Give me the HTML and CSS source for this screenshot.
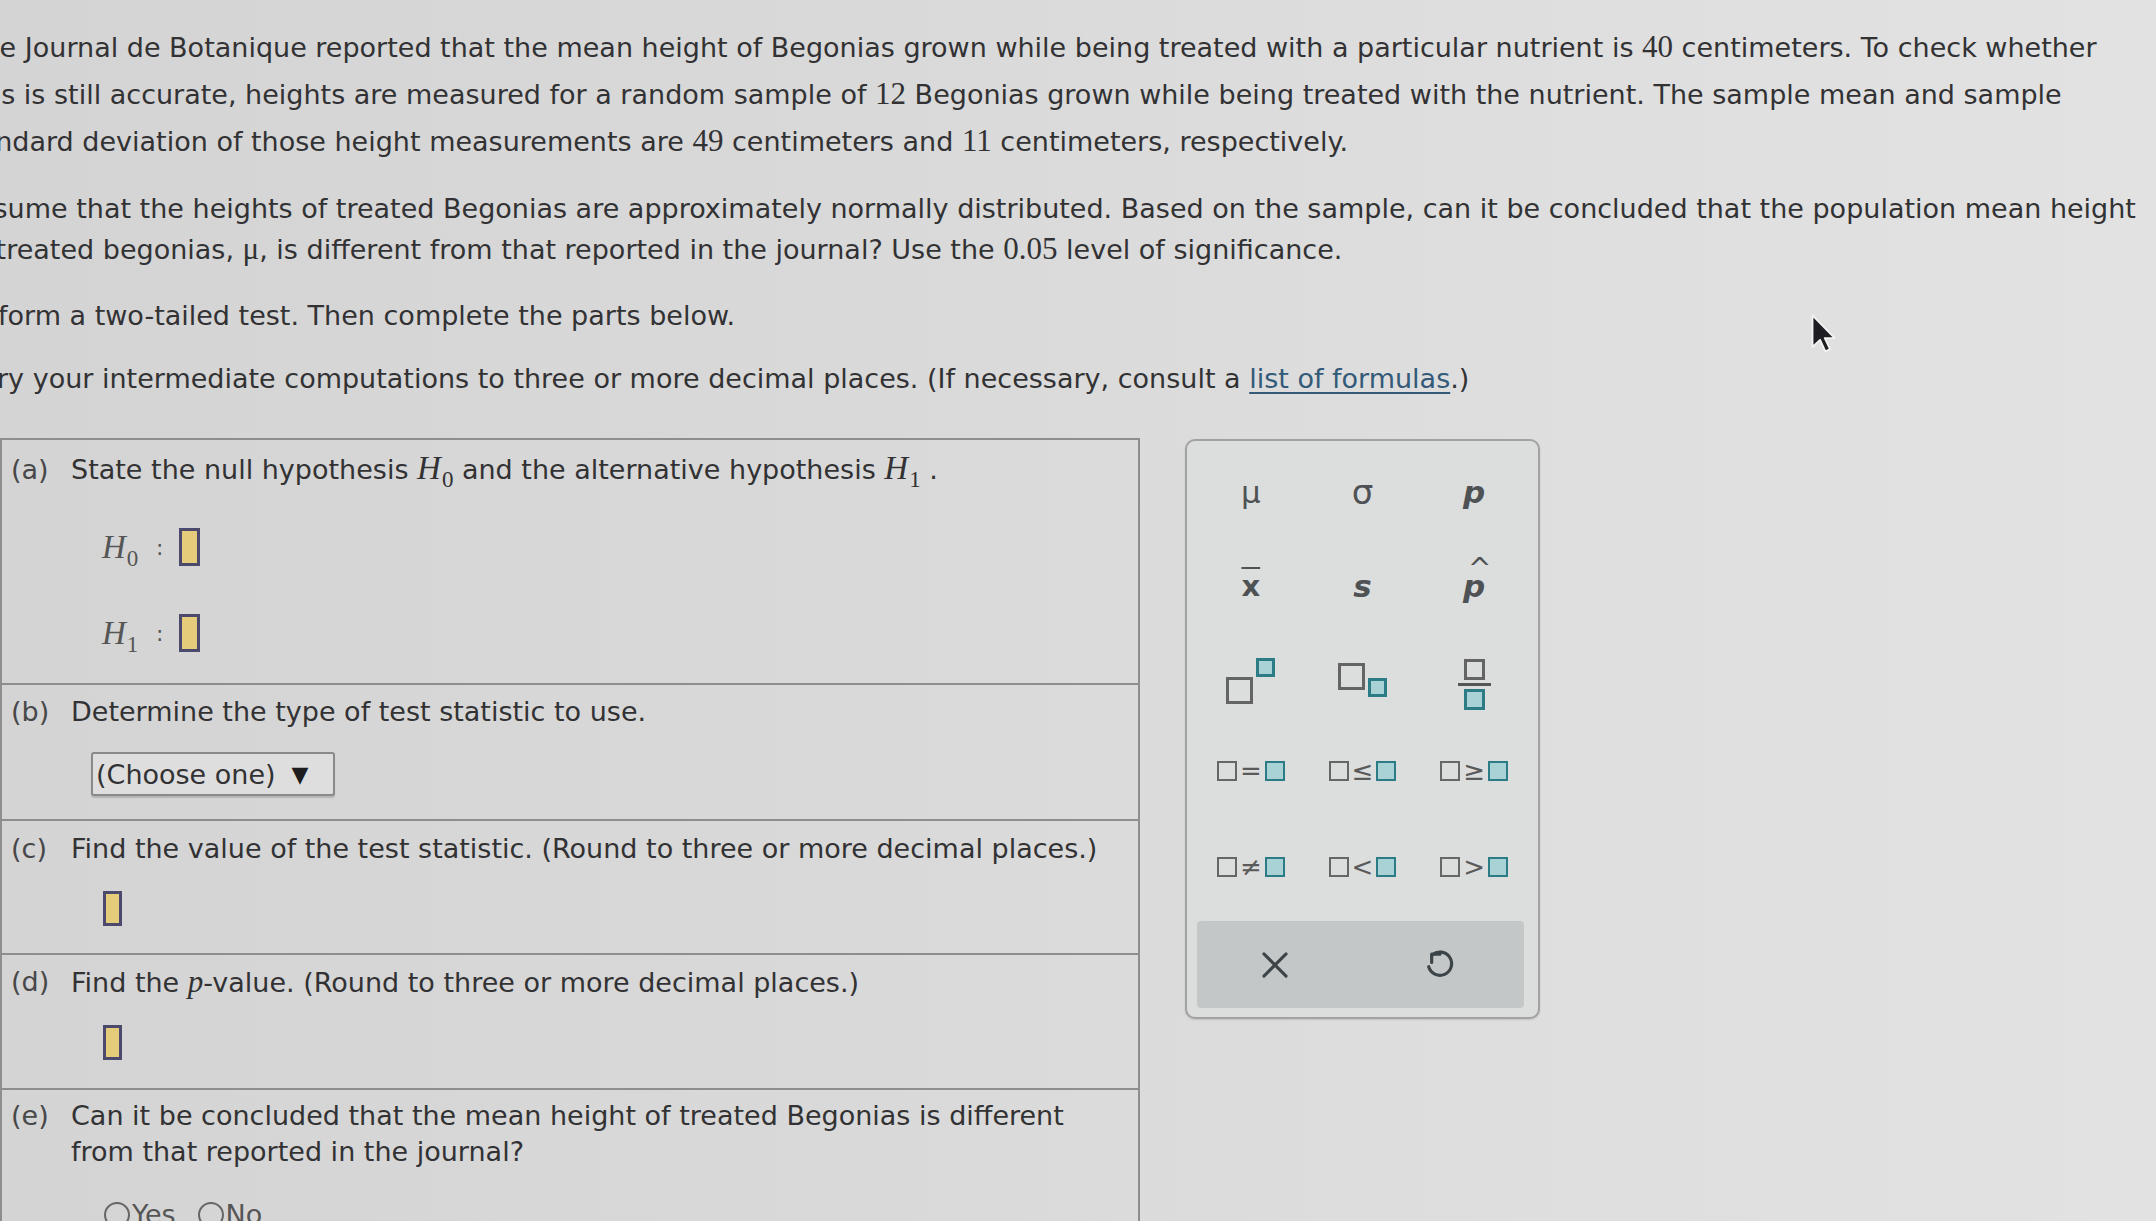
FILE: index.html
```html
<!DOCTYPE html>
<html>
<head>
<meta charset="utf-8">
<link rel="stylesheet" href="styles.css">
</head>
<body>
<div class="page">
  <div class="intro">
    <p class="p1">The Journal de Botanique reported that the mean height of Begonias grown while being treated with a particular nutrient is <span class="num">40</span> centimeters. To check whether<br>this is still accurate, heights are measured for a random sample of <span class="num">12</span> Begonias grown while being treated with the nutrient. The sample mean and sample<br><span class="l3">standard deviation of those height measurements are <span class="num">49</span> centimeters and <span class="num">11</span> centimeters, respectively.</span></p>
    <p class="p2">Assume that the heights of treated Begonias are approximately normally distributed. Based on the sample, can it be concluded that the population mean height<br>of treated begonias, <span class="num">μ</span>, is different from that reported in the journal? Use the <span class="num">0.05</span> level of significance.</p>
    <p class="p3">Perform a two-tailed test. Then complete the parts below.</p>
    <p class="p4">Carry your intermediate computations to three or more decimal places. (If necessary, consult a <a class="link">list of formulas</a>.)</p>
  </div>

  <div class="work">
    <div class="parts">
      <div class="part part-a">
        <div class="head"><span class="lbl">(a)</span><span class="txt">State the null hypothesis <span class="hv">H<sub>0</sub></span> and the alternative hypothesis <span class="hv">H<sub>1</sub></span> .</span></div>
        <div class="hyp"><span class="hv big">H<sub>0</sub></span><span class="colon">:</span><span class="inbox"></span></div>
        <div class="hyp hyp2"><span class="hv big">H<sub>1</sub></span><span class="colon">:</span><span class="inbox"></span></div>
      </div>
      <div class="part part-b">
        <div class="head"><span class="lbl">(b)</span><span class="txt">Determine the type of test statistic to use.</span></div>
        <div class="select"><span>(Choose one)</span><span class="tri">▼</span></div>
      </div>
      <div class="part part-c">
        <div class="head"><span class="lbl">(c)</span><span class="txt">Find the value of the test statistic. (Round to three or more decimal places.)</span></div>
        <div class="ans"><span class="inbox small"></span></div>
      </div>
      <div class="part part-d">
        <div class="head"><span class="lbl">(d)</span><span class="txt">Find the <i class="pv">p</i>-value. (Round to three or more decimal places.)</span></div>
        <div class="ans"><span class="inbox small"></span></div>
      </div>
      <div class="part part-e">
        <div class="head"><span class="lbl">(e)</span><span class="txt">Can it be concluded that the mean height of treated Begonias is different<br>from that reported in the journal?</span></div>
        <div class="radios"><span class="radio"></span><span class="rl">Yes</span><span class="radio"></span><span class="rl">No</span></div>
      </div>
    </div>

    <div class="palette">
      <div class="grid">
        <div class="cell sym">μ</div>
        <div class="cell sym sigma">σ</div>
        <div class="cell sym it">p</div>
        <div class="cell sym xbar">x</div>
        <div class="cell sym it">s</div>
        <div class="cell sym it"><span class="phat">p</span></div>
        <div class="cell"><span class="tpl sup"><span class="sq g"></span><span class="sq t s"></span></span></div>
        <div class="cell"><span class="tpl sub"><span class="sq g"></span><span class="sq t s"></span></span></div>
        <div class="cell"><span class="tpl frac"><span class="sq g s"></span><span class="bar"></span><span class="sq t s"></span></span></div>
        <div class="cell"><span class="rel"><span class="mini g"></span><span class="op">=</span><span class="mini t"></span></span></div>
        <div class="cell"><span class="rel"><span class="mini g"></span><span class="op">≤</span><span class="mini t"></span></span></div>
        <div class="cell"><span class="rel"><span class="mini g"></span><span class="op">≥</span><span class="mini t"></span></span></div>
        <div class="cell"><span class="rel"><span class="mini g"></span><span class="op">≠</span><span class="mini t"></span></span></div>
        <div class="cell"><span class="rel"><span class="mini g"></span><span class="op">&lt;</span><span class="mini t"></span></span></div>
        <div class="cell"><span class="rel"><span class="mini g"></span><span class="op">&gt;</span><span class="mini t"></span></span></div>
      </div>
      <div class="actions">
        <svg class="ico ico-x" viewBox="0 0 24 24" width="38" height="38"><path d="M5 5 L19 19 M19 5 L5 19" stroke="#3c4448" stroke-width="1.9" fill="none" stroke-linecap="round"/></svg>
        <svg class="ico ico-undo" viewBox="0 0 24 24" width="40" height="40"><path d="M7 10.5 V5.5 H12" stroke="#3c4448" stroke-width="1.9" fill="none" stroke-linecap="round" stroke-linejoin="round"/><path d="M7.4 5.9 A7 7 0 1 1 5.2 13" stroke="#3c4448" stroke-width="1.9" fill="none" stroke-linecap="round"/></svg>
      </div>
    </div>
  </div>
</div>
<svg class="cursor" viewBox="0 0 22 36" width="26" height="42"><path d="M2 2 L2 29 L8.5 23 L13 33 L17 31 L12.5 21.5 L21 21.5 Z" fill="#1e1e22" stroke="#f2f2f2" stroke-width="1.6" stroke-linejoin="round"/></svg>
</body>
</html>
```

FILE: styles.css
```css
html, body {
  margin: 0;
  padding: 0;
}
body {
  width: 2156px;
  height: 1221px;
  overflow: hidden;
  position: relative;
  background: linear-gradient(90deg, #d4d4d4 0%, #d9d9d9 40%, #dfdfdf 75%, #e2e2e2 100%);
  font-family: "DejaVu Sans", Verdana, sans-serif;
  font-size: 27px;
  color: #323234;
}
.page {
  padding-top: 24px;
}
.intro p {
  margin: 0;
  white-space: nowrap;
}
.p1 { line-height: 47px; margin-left: -34px !important; }
.l3 { margin-left: -12px; }
.p2 { line-height: 41px; margin-top: 23px !important; margin-left: -39px !important; }
.p3 { line-height: 41px; margin-top: 25px !important; margin-left: -45px !important; }
.p4 { line-height: 41px; margin-top: 22px !important; margin-left: -49px !important; }
.num {
  font-family: "Liberation Serif", "Times New Roman", serif;
  font-size: 31px;
  line-height: 1;
}
.link {
  color: #335a78;
  text-decoration: underline;
  text-decoration-thickness: 2px;
  text-underline-offset: 4px;
}

.work {
  display: flex;
  align-items: flex-start;
  gap: 45px;
  margin-top: 39px;
}
.parts {
  width: 1140px;
  flex: none;
  border: 2px solid #8e8e8e;
  border-bottom: none;
  height: 800px;
  box-sizing: border-box;
}
.part {
  box-sizing: border-box;
  border-bottom: 2px solid #8e8e8e;
  padding-left: 9px;
}
.part-a { height: 245px; padding-top: 12px; }
.part-b { height: 136px; padding-top: 9px; }
.part-c { height: 134px; padding-top: 10px; }
.part-d { height: 135px; padding-top: 9px; }
.part-e { border-bottom: none; padding-top: 8px; }

.head {
  display: flex;
  line-height: 36px;
  white-space: nowrap;
}
.lbl {
  width: 60px;
  flex: none;
  color: #48484a;
}
.hv {
  font-family: "Liberation Serif", "Times New Roman", serif;
  font-style: italic;
  font-size: 33px;
  line-height: 1;
}
.hv sub {
  font-style: normal;
  font-size: 23px;
  vertical-align: -8px;
  line-height: 0;
  margin-left: 1px;
}
.hyp {
  display: flex;
  align-items: center;
  height: 38px;
  margin-left: 91px;
  margin-top: 40px;
  color: #555;
}
.hyp2 { margin-top: 48px; }
.hyp .big { font-size: 33px; width: 54px; }
.colon {
  font-size: 22px;
  width: 23px;
  color: #555;
}
.inbox {
  display: inline-block;
  box-sizing: border-box;
  width: 21px;
  height: 38px;
  border: 3px solid #4b4a6c;
  background: #e5cc7a;
}
.inbox.small {
  width: 19px;
  height: 35px;
}
.select {
  display: inline-flex;
  align-items: center;
  gap: 16px;
  box-sizing: border-box;
  width: 244px;
  height: 44px;
  margin-left: 80px;
  margin-top: 22px;
  padding-left: 3px;
  border: 2px solid #8a8a8a;
  border-radius: 3px;
  background: #dedede;
  box-shadow: 0 2px 1px rgba(0,0,0,0.15);
  color: #323234;
}
.tri {
  font-size: 22px;
  color: #1d1d1f;
}
.ans {
  margin-left: 92px;
  margin-top: 24px;
  height: 35px;
}
.pv {
  font-family: "Liberation Serif", serif;
  font-size: 31px;
}
.radios {
  display: flex;
  align-items: center;
  margin-left: 93px;
  margin-top: 29px;
  color: #555;
}
.radio {
  width: 22px;
  height: 22px;
  border: 2px solid #666;
  border-radius: 50%;
  margin-right: 2px;
}
.rl { margin-right: 22px; font-size: 27px; }

.palette {
  flex: none;
  box-sizing: border-box;
  width: 355px;
  height: 580px;
  margin-top: 1px;
  border: 2px solid #a2a2a2;
  border-radius: 10px;
  background: #dcdede;
  padding: 4px 8px 6px 6px;
  display: flex;
  flex-direction: column;
  box-shadow: 0 1px 2px rgba(0,0,0,0.12);
}
.grid {
  display: grid;
  grid-template-columns: repeat(3, 1fr);
  grid-template-rows: 94px 94px 90px 96px 96px;
  margin-left: 2px;
}
.cell {
  display: flex;
  align-items: center;
  justify-content: center;
}
.sym {
  font-family: "DejaVu Sans", sans-serif;
  font-size: 31px;
  color: #4f5254;
}
.sigma { font-size: 34px; }
.it { font-style: italic; font-weight: bold; }
.xbar {
  font-weight: bold;
  text-decoration: overline;
  text-decoration-thickness: 2px;
  font-size: 29px;
}
.phat { position: relative; display: inline-block; }
.phat::before {
  content: "^";
  position: absolute;
  top: -16px;
  left: 5px;
  font-weight: normal;
  font-style: normal;
  font-size: 28px;
}
.sq {
  display: inline-block;
  box-sizing: border-box;
  width: 27px;
  height: 27px;
  border: 3px solid #646464;
}
.sq.s { width: 19px; height: 19px; }
.sq.t {
  border-color: #2c7c86;
  background: #a8d2d6;
}
.tpl { display: inline-flex; }
.sup { align-items: flex-start; padding-top: 14px; }
.sup .sq.g { margin-top: 11px; margin-right: 3px; }
.sup .sq.t { margin-top: -8px; }
.sub { align-items: flex-start; margin-top: 3px; }
.sub .sq.t { margin-top: 15px; margin-left: 3px; }
.frac {
  flex-direction: column;
  align-items: center;
  margin-top: 12px;
}
.frac .sq.g { width: 21px; height: 21px; }
.frac .sq.t { width: 21px; height: 21px; }
.frac .bar {
  width: 33px;
  height: 3px;
  background: #555;
  margin: 3px 0 3px;
}
.rel {
  display: inline-flex;
  align-items: center;
  gap: 3px;
}
.mini {
  display: inline-block;
  box-sizing: border-box;
  width: 20px;
  height: 20px;
  border: 2px solid #666;
}
.mini.t {
  border-color: #2c7c86;
  background: #a8d2d6;
}
.op {
  font-size: 26px;
  color: #5a5a5a;
  line-height: 1;
}
.actions {
  margin-top: 6px;
  height: 87px;
  margin-left: 4px;
  margin-right: 6px;
  background: #c3c7c7;
  border-radius: 4px;
  display: flex;
  align-items: center;
  gap: 126px;
  padding-left: 59px;
}
.cursor {
  position: absolute;
  left: 1810px;
  top: 313px;
}
```
